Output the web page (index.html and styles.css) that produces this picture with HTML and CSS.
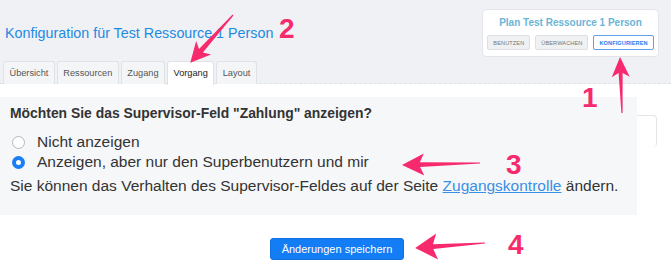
FILE: index.html
```html
<!DOCTYPE html>
<html lang="de">

<head>
    <meta charset="UTF-8">
    <title>Konfiguration</title>
    <link rel="stylesheet" href="styles.css">
</head>

<body>
    <!-- Header -->
    <header class="top">
        <div class="top-row">
            <h1 class="title">Konfiguration für Test Ressource 1 Person</h1>
            <div class="plan-card">
                <div class="plan-name">Plan Test Ressource 1 Person</div>
                <div class="plan-buttons">
                    <button class="plan-btn">Benutzen</button>
                    <button class="plan-btn">Überwachen</button>
                    <button class="plan-btn active">Konfigurieren</button>
                </div>
            </div>
        </div>
        <ul class="tabs">
            <li class="tab">Übersicht</li>
            <li class="tab">Ressourcen</li>
            <li class="tab">Zugang</li>
            <li class="tab active">Vorgang</li>
            <li class="tab">Layout</li>
        </ul>
    </header>

    <!-- Content -->
    <main class="content">
        <div class="row">
            <section class="panel">
                <h2 class="question">Möchten Sie das Supervisor-Feld "Zahlung" anzeigen?</h2>
                <label class="option"><span class="radio"></span>Nicht anzeigen</label>
                <label class="option"><span class="radio checked"></span>Anzeigen, aber nur den Superbenutzern und mir</label>
                <p class="hint">Sie können das Verhalten des Supervisor-Feldes auf der Seite <a href="#">Zugangskontrolle</a> ändern.</p>
            </section>
            <div class="ghost-box"></div>
        </div>
        <div class="actions">
            <button class="save">Änderungen speichern</button>
        </div>
    </main>

    <!-- Annotations -->
    <svg class="marks" width="671" height="280" viewBox="0 0 671 280">
        <g fill="#f72a6e">
            <g transform="translate(233 15) rotate(131.9)">
                <polygon points="0,-0.6 48,-2.6 44,-10 64,0 44,10 48,2.6 0,0.6" />
            </g>
            <g transform="translate(622 113) rotate(-92)">
                <polygon points="0,-0.6 40,-2 36,-9 56,0 36,9 40,2 0,0.6" />
            </g>
            <g transform="translate(480 163) rotate(178.5)">
                <polygon points="0,-0.6 60,-2.4 56,-11 78,0 56,11 60,2.4 0,0.6" />
            </g>
            <g transform="translate(485 243) rotate(175.9)">
                <polygon points="0,-0.6 52,-2.4 48,-13 70,0 48,13 52,2.4 0,0.6" />
            </g>
        </g>
    </svg>
    <span class="num n1">1</span>
    <span class="num n2">2</span>
    <span class="num n3">3</span>
    <span class="num n4">4</span>
</body>

</html>
```

FILE: styles.css
```css
* {
    box-sizing: border-box;
    margin: 0;
    padding: 0;
}

body {
    font-family: "Liberation Sans", Arial, sans-serif;
    background-color: #fff;
    color: #333;
    width: 671px;
    height: 280px;
    overflow: hidden;
    position: relative;
}

.top {
    background-color: #eff1f4;
    border-bottom: 1px dashed #dfe2e6;
    height: 84px;
}

.top-row {
    display: flex;
    justify-content: space-between;
    align-items: center;
    padding: 9px 12px 0 5px;
}

.title {
    font-size: 14.3px;
    font-weight: normal;
    color: #1e8ae3;
    margin-top: -1px;
}

.plan-card {
    width: 177px;
    height: 48px;
    background-color: #fff;
    border: 1px solid #e2e5e9;
    border-radius: 4px;
    display: flex;
    flex-direction: column;
    align-items: center;
    padding-top: 7px;
}

.plan-name {
    font-size: 10px;
    font-weight: bold;
    color: #6ab5d6;
}

.plan-buttons {
    display: flex;
    gap: 5px;
    margin-top: 7px;
}

.plan-btn {
    font-family: "Liberation Sans", Arial, sans-serif;
    font-size: 5.6px;
    text-transform: uppercase;
    color: #777;
    background-color: #f0f1f3;
    border: 1px solid #dcdfe3;
    border-radius: 2px;
    height: 15px;
    padding: 0 5px;
    letter-spacing: 0.1px;
}

.plan-btn.active {
    background-color: #fff;
    color: #1b7cf2;
    border-color: #5e9ff0;
    font-weight: bold;
}

.tabs {
    list-style: none;
    display: flex;
    gap: 2px;
    padding-left: 3px;
    margin-top: 4px;
}

.tab {
    height: 23px;
    line-height: 22px;
    padding: 0 5.5px;
    font-size: 9.2px;
    color: #555;
    background-color: #f4f5f7;
    border: 1px solid #dfe2e6;
    border-bottom: none;
    border-radius: 3px 3px 0 0;
}

.tab.active {
    background-color: #fff;
    color: #222;
    height: 24px;
}

.content {
    padding-top: 13px;
}

.row {
    display: flex;
}

.panel {
    width: 637px;
    height: 118px;
    background-color: #f6f7f9;
    padding: 7px 10px 0;
}

.ghost-box {
    width: 20px;
    height: 32px;
    margin-top: 18px;
    border: 1px solid #e3e5e8;
    border-left: none;
    border-bottom: none;
    border-radius: 0 4px 4px 0;
}

.question {
    font-size: 13.9px;
    font-weight: bold;
    color: #333;
    line-height: 18px;
    margin-bottom: 10px;
}

.option {
    display: flex;
    align-items: center;
    height: 20px;
    font-size: 15.5px;
    color: #333;
    padding-left: 2px;
}

.radio {
    width: 13px;
    height: 13px;
    border-radius: 50%;
    border: 1px solid #b5b8bc;
    background-color: #fff;
    margin-right: 12px;
    flex-shrink: 0;
}

.radio.checked {
    border: 4px solid #1a7ff5;
    background-color: #fff;
}

.hint {
    font-size: 15.5px;
    line-height: 20px;
    margin-top: 4px;
    color: #333;
}

.hint a {
    color: #3a8fe6;
}

.actions {
    display: flex;
    justify-content: center;
    padding-top: 23px;
}

.save {
    font-family: "Liberation Sans", Arial, sans-serif;
    font-size: 11px;
    color: #fff;
    background-color: #137df5;
    border: 1px solid #0f72e0;
    border-radius: 3px;
    height: 22px;
    padding: 0 11px;
    margin-left: 3px;
}

/* annotations */
.marks {
    position: absolute;
    left: 0;
    top: 0;
    pointer-events: none;
}

.num {
    position: absolute;
    color: #f72a6e;
    font-size: 28px;
    font-weight: bold;
    line-height: 20px;
}

.n1 { left: 582px; top: 88px; }
.n2 { left: 279px; top: 19px; }
.n3 { left: 506px; top: 155px; }
.n4 { left: 508px; top: 235px; }
```
